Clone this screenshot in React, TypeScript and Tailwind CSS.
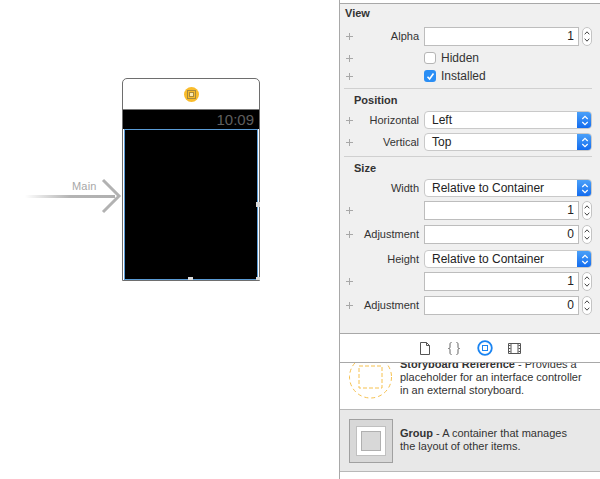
import React from "react";

const Plus = () => (
  <svg width="9" height="9" viewBox="0 0 9 9" className="shrink-0">
    <path d="M4.5 1v7M1 4.5h7" stroke="#a8a8a8" strokeWidth="1" fill="none" />
  </svg>
);

const Stepper = () => (
  <div className="ml-[3px] w-[10px] h-[19px] rounded-[5px] border border-[#c4c4c4] bg-white flex flex-col items-center justify-center gap-[3px] shrink-0">
    <svg width="6" height="4" viewBox="0 0 6 4"><path d="M.7 3.300 3 .8l2.300 2.500" stroke="#444" strokeWidth="1" fill="none" /></svg>
    <svg width="6" height="4" viewBox="0 0 6 4"><path d="M.7.7 3 3.200 5.300.7" stroke="#444" strokeWidth="1" fill="none" /></svg>
  </div>
);

const Label = ({ children }: { children?: React.ReactNode }) => (
  <div className="w-[64px] text-right text-[#333] text-[11px] shrink-0 mr-[5px] ml-[1px] whitespace-nowrap">{children}</div>
);

const Field = ({ label, value, mt }: { label?: string; value: string; mt: string }) => (
  <div className={`flex items-center h-[19px] pl-[5px] ${mt}`}>
    <div className="w-[9px] shrink-0"><Plus /></div>
    <Label>{label}</Label>
    <div className="w-[155px] h-[19px] border border-[#bdbdbd] bg-white text-right pr-[4px] leading-[17px] text-[#222]">{value}</div>
    <Stepper />
  </div>
);

const Select = ({ label, value, plus = true, mt }: { label: string; value: string; plus?: boolean; mt: string }) => (
  <div className={`flex items-center h-[18px] pl-[5px] ${mt}`}>
    <div className="w-[9px] shrink-0">{plus && <Plus />}</div>
    <Label>{label}</Label>
    <div className="w-[168px] h-[18px] rounded-[4px] border border-[#c9c9c9] bg-white flex overflow-hidden">
      <div className="flex-1 pl-[7px] leading-[16px] text-[#222]">{value}</div>
      <div className="w-[15px] bg-gradient-to-b from-[#4da3f9] to-[#0e68ee] flex items-center justify-center -my-px -mr-px">
        <svg width="8" height="11" viewBox="0 0 8 11">
          <path d="M1.300 4 4 1.300 6.700 4M1.300 7 4 9.700 6.700 7" stroke="#fff" strokeWidth="1.200" fill="none" />
        </svg>
      </div>
    </div>
  </div>
);

const Check = ({ label, checked, mt }: { label: string; checked?: boolean; mt: string }) => (
  <div className={`flex items-center h-[12px] pl-[5px] ${mt}`}>
    <div className="w-[9px] shrink-0"><Plus /></div>
    <Label />
    <div className={`w-[12px] h-[12px] rounded-[3px] flex items-center justify-center shrink-0 ${checked ? "bg-[#2a8ef5]" : "bg-white border border-[#b5b5b5]"}`}>
      {checked && (
        <svg width="9" height="9" viewBox="0 0 9 9"><path d="M1.500 4.800 3.600 7 7.500 1.500" stroke="#fff" strokeWidth="1.600" fill="none" /></svg>
      )}
    </div>
    <span className="ml-[5px] text-[#333]">{label}</span>
  </div>
);

export default function App() {
  return (
    <div className="flex w-[600px] h-[479px] bg-white overflow-hidden text-[12px]" style={{ fontFamily: '"Liberation Sans", Arial, sans-serif' }}>
      {/* Storyboard canvas */}
      <div className="relative w-[339px] h-full shrink-0 bg-white">
        <span className="absolute left-[72px] top-[178px] text-[11px] tracking-[0.2px] text-[#a8a8a8]">Main</span>
        <div className="absolute left-[25px] top-[195px] w-[90px] h-[3px] bg-gradient-to-r from-white via-[#b4b4b4] to-[#b0b0b0]" />
        <svg className="absolute left-[100px] top-[177px]" width="24" height="38" viewBox="0 0 24 38">
          <path d="M3 3 19 19 3 35" stroke="#b2b2b2" strokeWidth="3" fill="none" />
        </svg>
        <div className="absolute left-[122px] top-[78px] w-[138px] h-[203px] rounded-t-[5px] border border-[#6e6e6e] bg-white overflow-hidden flex flex-col">
          <div className="h-[31px] flex items-center justify-center shrink-0 border-b border-[#777]">
            <svg width="15" height="15" viewBox="0 0 15 15">
              <circle cx="7.500" cy="7.500" r="7.500" fill="#f9bc2c" />
              <rect x="3.500" y="3.500" width="8" height="8" fill="none" stroke="#a88a3c" strokeWidth="1" />
              <rect x="5.500" y="5.500" width="4" height="4" fill="#fde9ad" stroke="#a88a3c" strokeWidth="1" />
            </svg>
          </div>
          <div className="h-[19px] bg-black text-right pr-[5px] text-[#5f5f5f] text-[15px] leading-[19px] shrink-0">10:09</div>
          <div className="flex-1 bg-black border border-[#5a9bd5] mx-px" />
        </div>
        <div className="absolute left-[256px] top-[202px] w-[4px] h-[5px] bg-[#dcdcdc]" />
        <div className="absolute left-[188px] top-[277px] w-[5px] h-[3px] bg-[#dcdcdc]" />
        <div className="absolute left-[256px] top-[277px] w-[4px] h-[3px] bg-[#dcdcdc]" />
      </div>

      {/* Inspector */}
      <div className="flex-1 h-full border-l border-[#a8a8a8] flex flex-col">
        <div className="h-[3px] bg-white border-b border-[#a8a8a8] box-content shrink-0" />
        <div className="h-[329px] bg-[#f0f0f0] shrink-0 flex flex-col">
          <div className="pl-[5px] pt-[3px] font-bold text-[#333] leading-[13px] text-[11px]">View</div>
          <Field label="Alpha" value="1" mt="mt-[7px]" />
          <Check label="Hidden" mt="mt-[6px]" />
          <Check label="Installed" checked mt="mt-[6px]" />
          <div className="h-px bg-[#d0d0d0] ml-[4px] mr-[8px] mt-[6px] shrink-0" />
          <div className="pl-[14px] mt-[5px] font-bold text-[#333] leading-[13px] text-[11px]">Position</div>
          <Select label="Horizontal" value="Left" mt="mt-[4px]" />
          <Select label="Vertical" value="Top" mt="mt-[4px]" />
          <div className="h-px bg-[#d0d0d0] ml-[4px] mr-[8px] mt-[5px] shrink-0" />
          <div className="pl-[14px] mt-[5px] font-bold text-[#333] leading-[13px] text-[11px]">Size</div>
          <Select label="Width" value="Relative to Container" plus={false} mt="mt-[4px]" />
          <Field value="1" mt="mt-[4px]" />
          <Field label="Adjustment" value="0" mt="mt-[5px]" />
          <Select label="Height" value="Relative to Container" plus={false} mt="mt-[6px]" />
          <Field value="1" mt="mt-[4px]" />
          <Field label="Adjustment" value="0" mt="mt-[5px]" />
        </div>
        <div className="h-[30px] shrink-0 border-y border-[#a8a8a8] bg-white flex items-center gap-[17px] pl-[79px]">
          <svg width="12" height="13" viewBox="0 0 12 13"><path d="M1.500.500h6l3 3v9h-9zM7.500.500v3h3" fill="none" stroke="#555" /></svg>
          <svg width="12" height="13" viewBox="0 0 12 13">
            <path d="M3.500.500C2 .5 2 1.500 2 3v2c0 1-.5 1.500-1.500 1.500C1.500 6.500 2 7 2 8v2c0 1.500 0 2.500 1.500 2.500M8.500.500C10 .5 10 1.500 10 3v2c0 1 .5 1.500 1.500 1.500C10.500 6.500 10 7 10 8v2c0 1.500 0 2.500-1.500 2.500" fill="none" stroke="#666" />
          </svg>
          <svg width="16" height="16" viewBox="0 0 16 16" className="-mr-[2px]"><circle cx="8" cy="8" r="6.800" fill="none" stroke="#1a84f2" strokeWidth="1.800" /><rect x="5.500" y="5.500" width="5" height="5" fill="none" stroke="#1a84f2" /></svg>
          <svg width="13" height="11" viewBox="0 0 13 11"><path d="M.500.500h12v10H.500zM3 .500v10M10 .500v10" fill="none" stroke="#555" /><path d="M1 2.500h1.500M1 5.500h1.500M1 8.500h1.500M10.500 2.500H12M10.500 5.500H12M10.500 8.500H12" stroke="#555" /></svg>
        </div>
        <div className="h-[46px] shrink-0 overflow-hidden relative bg-white">
          <svg width="46" height="50" viewBox="0 0 46 50" className="absolute left-[8px] -top-[11px]">
            <circle cx="22.500" cy="25" r="21" fill="none" stroke="#f6c14f" strokeDasharray="4 3" />
            <rect x="11" y="14" width="23" height="22" fill="none" stroke="#f6c14f" strokeDasharray="4 2" />
          </svg>
          <div className="absolute left-[60px] -top-[5px] text-[#333] text-[11px] leading-[13px] whitespace-nowrap">
            <b>Storyboard Reference</b> - Provides a<br />placeholder for an interface controller<br />in an external storyboard.
          </div>
        </div>
        <div className="h-[63px] shrink-0 border-y border-[#b8b8b8] bg-[#e8e8e8] flex items-center pl-[9px]">
          <div className="w-[44px] h-[44px] bg-[#d8d8d8] border border-[#a0a0a0] flex items-center justify-center shrink-0">
            <div className="w-[30px] h-[30px] bg-white border border-[#c0c0c0] flex items-center justify-center">
              <div className="w-[20px] h-[20px] bg-[#d8d8d8] border border-[#b0b0b0]" />
            </div>
          </div>
          <div className="ml-[7px] mb-[2px] text-[#333] text-[11px] leading-[13px] whitespace-nowrap">
            <b>Group</b> - A container that manages<br />the layout of other items.
          </div>
        </div>
        <div className="flex-1 bg-white" />
      </div>
    </div>
  );
}
